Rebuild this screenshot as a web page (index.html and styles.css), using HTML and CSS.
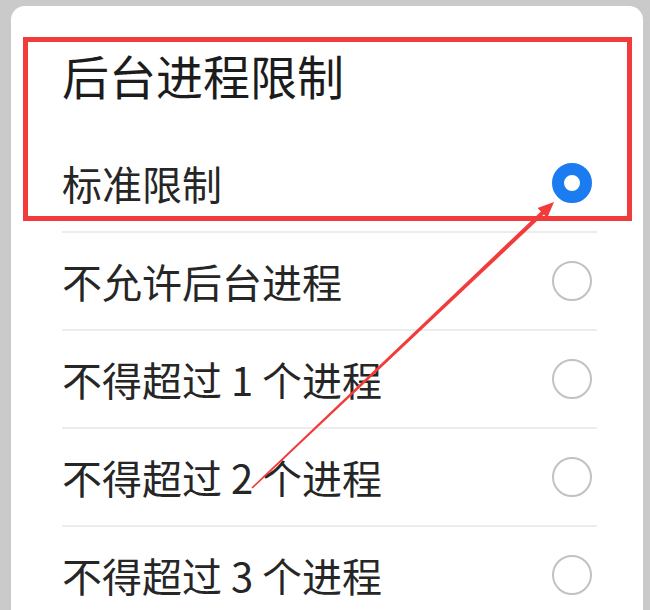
FILE: index.html
```html
<!DOCTYPE html>
<html lang="zh-CN">
<head>
<meta charset="utf-8">
<title>后台进程限制</title>
<link rel="stylesheet" href="styles.css">
</head>
<body>
<div class="screen">
  <div class="card">
    <div class="title">后台进程限制</div>
    <ul class="options">
      <li class="option"><span class="label">标准限制</span><span class="radio checked"></span></li>
      <li class="option"><span class="label">不允许后台进程</span><span class="radio"></span></li>
      <li class="option"><span class="label">不得超过 1 个进程</span><span class="radio"></span></li>
      <li class="option"><span class="label">不得超过 2 个进程</span><span class="radio"></span></li>
      <li class="option"><span class="label">不得超过 3 个进程</span><span class="radio"></span></li>
    </ul>
    <div class="highlight"></div>
  </div>
  <svg class="arrow" width="650" height="610" viewBox="0 0 650 610">
    <polygon points="251.4,487.4 540.9,211.4 537.6,207.9 554,202 547.2,218.1 543.9,214.6 252.6,488.6" fill="#f23b3b"/>
  </svg>
</div>
</body>
</html>
```
FILE: styles.css
```css
html, body {
  margin: 0;
  padding: 0;
  background: #cacaca;
  overflow: hidden;
}
.screen {
  position: relative;
  width: 650px;
  height: 610px;
  overflow: hidden;
  font-family: "Noto Sans CJK SC", "Noto Sans", sans-serif;
  color: #262626;
}
.card {
  position: relative;
  margin: 6px 7px 0 11px;
  width: 632px;
  height: 640px;
  background: #ffffff;
  border-radius: 14px 14px 0 0;
  padding-top: 39px;
  box-sizing: border-box;
}
.title {
  font-size: 47px;
  line-height: 60px;
  padding-left: 51px;
  margin-bottom: 30px;
  color: #1c1c1c;
}
.options {
  list-style: none;
  margin: 0;
  padding: 0;
}
.option {
  display: flex;
  align-items: center;
  justify-content: space-between;
  height: 96px;
  margin: 0 46px 0 51px;
  border-bottom: 2px solid #ececec;
  font-size: 40px;
}
.label {
  line-height: 50px;
}
.radio {
  width: 40px;
  height: 40px;
  margin-right: 5px;
  border-radius: 50%;
  border: 2px solid #c2c2c2;
  box-sizing: border-box;
}
.radio.checked {
  border: 12px solid #1a7cf0;
}
.highlight {
  position: absolute;
  left: 12px;
  top: 31px;
  width: 609px;
  height: 184px;
  border: 5px solid #f23b3b;
  box-sizing: border-box;
}
.arrow {
  position: absolute;
  left: 0;
  top: 0;
  pointer-events: none;
}
```
